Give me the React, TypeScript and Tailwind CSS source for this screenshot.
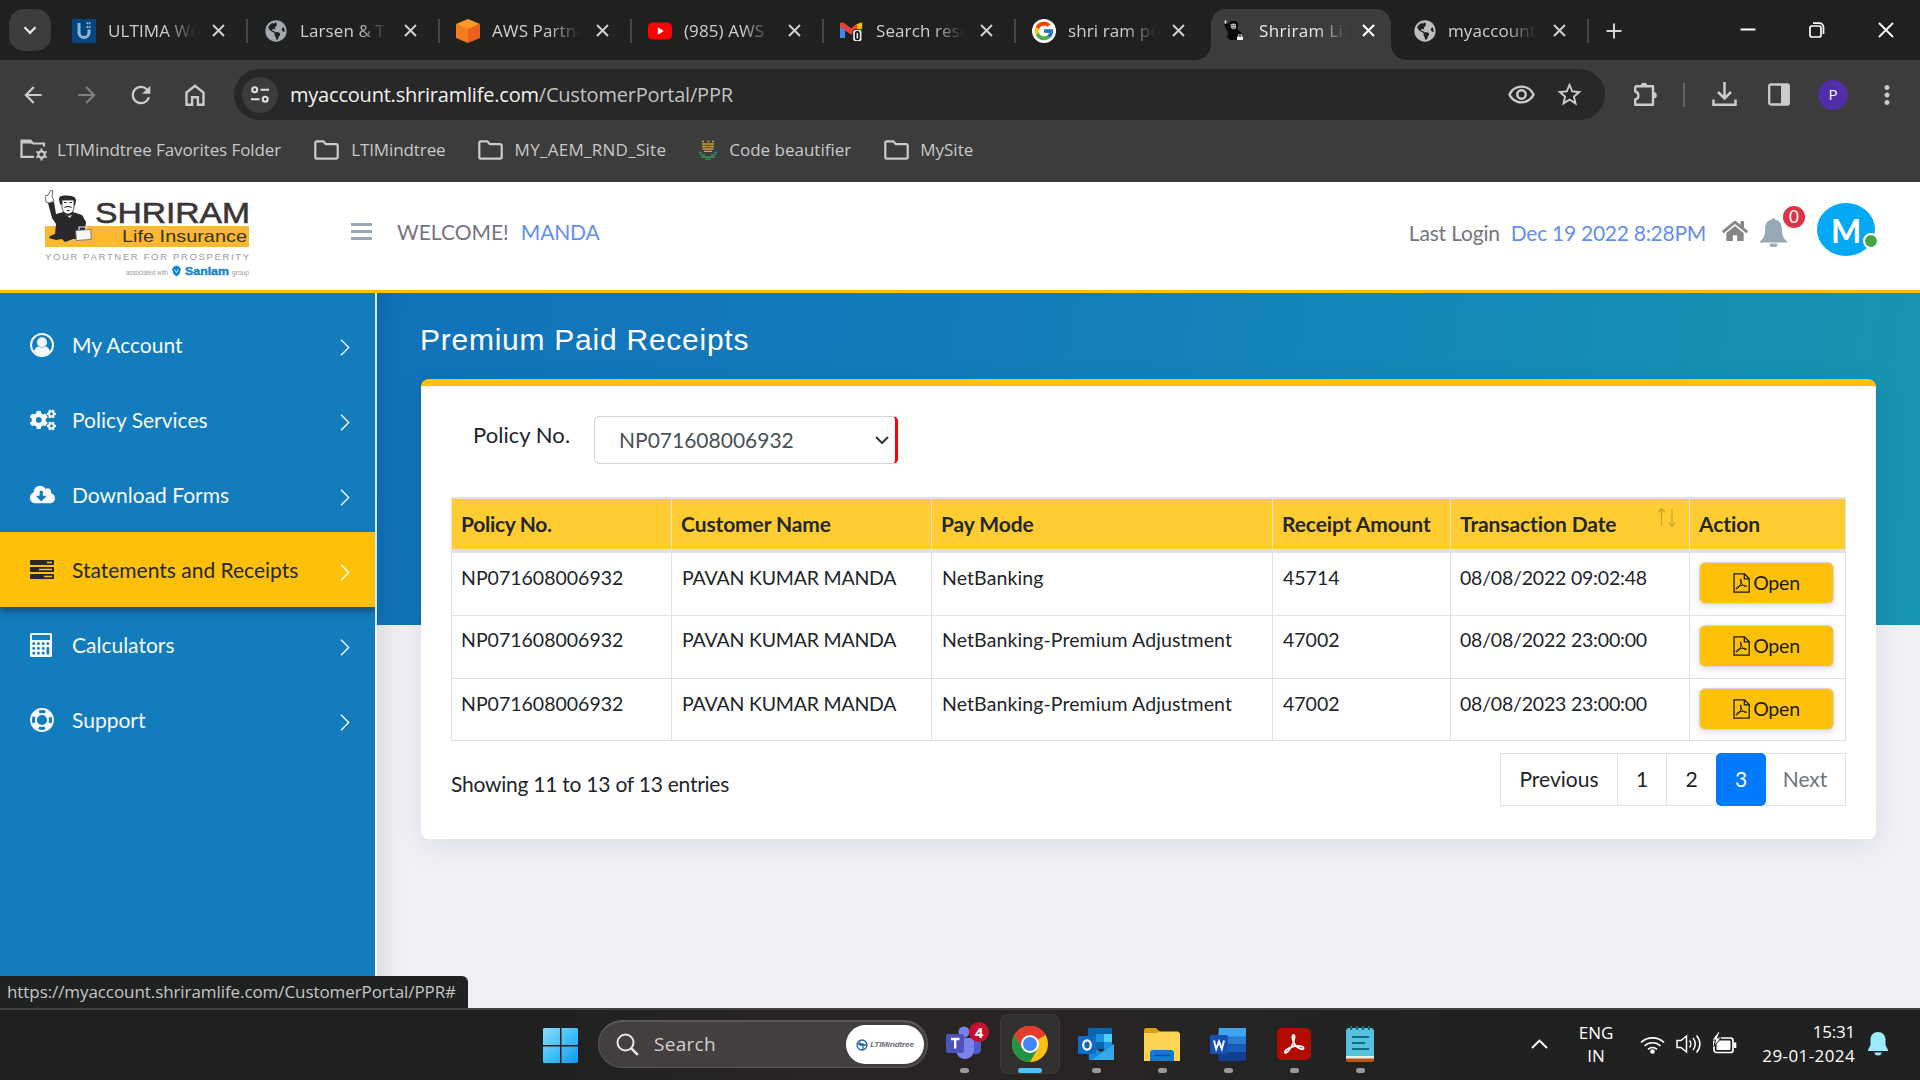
import React from 'react';
import {
  MdArrowBack, MdArrowForward, MdRefresh, MdStarBorder, MdOutlineRemoveRedEye,
  MdMoreVert,
} from 'react-icons/md';
import { FaCogs, FaCloudDownloadAlt, FaGlobeAmericas, FaHome } from 'react-icons/fa';
import { FcGoogle } from 'react-icons/fc';

/* ---------- browser chrome ---------- */

const UltimaIcon = () => (
  <svg width="24" height="24" viewBox="0 0 24 24">
    <rect width="24" height="24" fill="#05457e" />
    <path d="M7 4v9.500a5 5 0 0 0 10 0V10.500" fill="none" stroke="#8fb4d3" strokeWidth="3" />
    <path d="M14.500 4.300h4M14.500 8h4" stroke="#8fb4d3" strokeWidth="2" strokeDasharray="1.800 .6" />
  </svg>
);
const AwsIcon = () => (
  <svg width="24" height="24" viewBox="0 0 24 24">
    <path d="M12 0l12 5-12 6L0 5z" fill="#ff9a2a" />
    <path d="M0 5l12 5v14L0 19z" fill="#f47b20" />
    <path d="M24 5l-12 5v14l12-5z" fill="#ea5f1c" />
  </svg>
);
const YoutubeIcon = () => (
  <svg width="24" height="24" viewBox="0 0 24 24">
    <rect y="3.500" width="24" height="17" rx="4.500" fill="#ff0000" />
    <path d="M9.800 8.300l6 3.700-6 3.700z" fill="#fff" />
  </svg>
);
const GmailIcon = () => (
  <svg width="26" height="24" viewBox="0 0 26 24">
    <path d="M0 5v14.500h5.500V9z" fill="#4285f4" />
    <path d="M18.500 8v8H24V4.500z" fill="#34a853" />
    <path d="M18.500 4.500L24 2.500v6l-5.500 3.500z" fill="#fbbc04" />
    <path d="M0 3.500C2 2 4 3 5.500 4.200L12 9l6.500-5v7L12 16 0 7.500z" fill="#ea4335" />
    <rect x="13.800" y="10.500" width="10" height="13" rx="2.500" fill="#f1f1f1" stroke="#111" strokeWidth="1" />
    <rect x="17" y="13" width="3.600" height="8" rx="1.500" fill="none" stroke="#111" strokeWidth="1.800" />
  </svg>
);
const GoogleIcon = () => (
  <span className="flex size-6 items-center justify-center rounded-full bg-white"><FcGoogle size={22} /></span>
);
const ShriramFavicon = () => (
  <svg width="24" height="24" viewBox="0 0 24 24" className="shrink-0">
    <path d="M1 5l3-1 3 6 7 0 4 3 1 8-12 0-3-3 1-4z" fill="#0a0a0a" />
    <path d="M5 6c0-3 3-4 6-4s5 2 4 6l-1 4-7-1z" fill="#0a0a0a" />
    <path d="M7.500 5.500c2-1.500 4-1.500 5.500 0v3c-1 2.500-4 2.500-5 0z" fill="#b9b9b9" />
    <path d="M8.500 6.500h1.200M11 6.500h1.200M9.500 9h2" stroke="#222" strokeWidth=".9" />
    <path d="M2.500 1v4M1 3h3.300" stroke="#c9c9c9" strokeWidth="1.100" />
    <path d="M14 17.500h6v3.500h-6z" fill="#f4f4f4" />
    <path d="M15.500 17.500v-1.700h3v1.700" fill="none" stroke="#ddd" strokeWidth=".9" />
  </svg>
);
const GlobeIcon = () => <FaGlobeAmericas size={22} color="#a3a9b0" />;

const tabs = [
  { icon: <UltimaIcon />, title: 'ULTIMA Wo' },
  { icon: <GlobeIcon />, title: 'Larsen & Tou' },
  { icon: <AwsIcon />, title: 'AWS Partne' },
  { icon: <YoutubeIcon />, title: '(985) AWS' },
  { icon: <GmailIcon />, title: 'Search resu' },
  { icon: <GoogleIcon />, title: 'shri ram po' },
];

const CloseX = ({ className = '' }: { className?: string }) => (
  <svg className={className} width="13" height="13" viewBox="0 0 13 13">
    <path d="M1 1l11 11M12 1L1 12" stroke="currentColor" strokeWidth="2.100" />
  </svg>
);

const TabTitle = ({ children }: { children: React.ReactNode }) => (
  <span className="ml-3 w-[88px] shrink-0 overflow-hidden text-[17px] tracking-[0.1px] whitespace-nowrap [mask-image:linear-gradient(90deg,#000_65%,transparent_100%)]">
    {children}
  </span>
);

const TabStrip = () => (
  <div className="flex h-[60px] items-center bg-[#1f2020] text-[#cfcfcf]">
    <div className="ml-[9px] flex size-[42px] items-center justify-center rounded-[15px] bg-[#3c3c3c]">
      <svg width="14" height="9" viewBox="0 0 14 9"><path d="M1.500 1.300L7 6.800l5.500-5.500" fill="none" stroke="#e6e6e6" strokeWidth="2.300" /></svg>
    </div>
    <div className="ml-[21px] flex">
      {tabs.map((t, i) => (
        <div key={t.title} className="flex h-[24px] w-[192px] items-center pt-px">
          <span className="flex w-6 shrink-0 justify-center">{t.icon}</span>
          <TabTitle>{t.title}</TabTitle>
          <CloseX className="ml-[16px]" />
          {i < 5 && <span className="ml-[21px] h-6 w-[2px] bg-[#474747]" />}
        </div>
      ))}
    </div>
    <div className="-ml-[15px] flex h-[51px] items-end self-end">
      <span className="ml-[-13px] size-[15px] bg-[radial-gradient(circle_at_0_0,#1f2020_14.500px,#3c3c3c_15px)]" />
      <div className="flex h-[51px] w-[180px] items-center rounded-t-[15px] bg-[#3c3c3c] pb-[8px] pl-[12px]">
        <ShriramFavicon />
        <TabTitle><span className="tracking-[0.35px] text-[#e8e8e8]">Shriram Life</span></TabTitle>
        <CloseX className="ml-[15px] text-white" />
      </div>
      <span className="size-[15px] bg-[radial-gradient(circle_at_100%_0,#1f2020_14.500px,#3c3c3c_15px)]" />
    </div>
    <div className="ml-[8px] flex items-center pt-px">
      <FaGlobeAmericas size={22} color="#bdbdbd" className="shrink-0" />
      <TabTitle>myaccount.s</TabTitle>
      <CloseX className="ml-[17px]" />
      <span className="ml-[21px] h-6 w-[2px] bg-[#474747]" />
      <svg className="ml-[17px]" width="16" height="16" viewBox="0 0 16 16"><path d="M8 .5v15M.5 8h15" stroke="#d5d5d5" strokeWidth="2" /></svg>
    </div>
    <div className="mr-[26px] ml-auto flex items-center gap-[53px] text-white">
      <svg width="16" height="16" viewBox="0 0 16 16"><path d="M.5 7.500h15" stroke="#fff" strokeWidth="2" /></svg>
      <svg width="16" height="16" viewBox="0 0 16 16" fill="none" stroke="#fff" strokeWidth="1.700">
        <rect x="1" y="4" width="11" height="11" rx="2" />
        <path d="M4 1.200h6.500a4 4 0 0 1 4 4V12" />
      </svg>
      <svg width="16" height="16" viewBox="0 0 16 16"><path d="M1 1l14 14M15 1L1 15" stroke="#fff" strokeWidth="1.800" /></svg>
    </div>
  </div>
);

const Toolbar = () => (
  <div className="flex h-[69px] items-center bg-[#3c3c3c] text-[#cbcbcb]">
    <MdArrowBack size={26} className="ml-5" />
    <MdArrowForward size={26} className="ml-[28px] text-[#7f7f7f]" />
    <MdRefresh size={28} className="ml-[27px]" />
    <svg className="ml-[30px]" width="20" height="22" viewBox="0 0 20 22">
      <path d="M1.500 8.500L10 1.800l8.500 6.700v12.200h-5.600v-7.500H7.100v7.500H1.500z" fill="none" stroke="currentColor" strokeWidth="2.400" />
    </svg>
    <div className="ml-[29px] flex h-[51px] w-[1371px] items-center rounded-full bg-[#282828] pl-2">
      <span className="flex size-9 items-center justify-center rounded-full bg-[#3c3c3c]">
        <svg width="18" height="17" viewBox="0 0 18 17" fill="none" stroke="#dedede" strokeWidth="2.100">
          <circle cx="3.700" cy="3.700" r="2.500" /><path d="M9.500 3.700H18M0 13.300h8.500" /><circle cx="14.200" cy="13.300" r="2.500" />
        </svg>
      </span>
      <span className="ml-3 text-[20px] tracking-[-0.21px] text-[#c3c3c3]">
        <span className="text-[#f2f2f2]">myaccount.shriramlife.com</span>/CustomerPortal/PPR
      </span>
      <MdOutlineRemoveRedEye size={29} className="ml-auto" />
      <MdStarBorder size={29} className="mr-[21px] ml-[19px]" />
    </div>
    <svg className="ml-[27px]" width="26" height="26" viewBox="0 0 26 26">
      <path d="M3.200 4.300H21v5.200M21 16.500v6.300H3.200v-5.300c4.300-.6 4.300-7.300 0-8V4.300M21 9.300v7.500" fill="none" stroke="currentColor" strokeWidth="2.400" strokeLinejoin="round" />
      <path d="M8.700 4a3.300 3.300 0 0 1 6.600 0zM21.500 10a3.300 3.300 0 0 1 0 6.600z" fill="currentColor" />
    </svg>
    <span className="ml-[25px] h-6 w-[2px] bg-[#646464]" />
    <svg className="ml-[27px]" width="25" height="25" viewBox="0 0 25 25" fill="none" stroke="currentColor" strokeWidth="2.500">
      <path d="M12.500 0v16M6 10l6.500 6.500L19 10M1.500 17.500v5.300h22v-5.300" />
    </svg>
    <svg className="ml-[31px]" width="22" height="23" viewBox="0 0 22 23">
      <rect x="1.200" y="1.500" width="19.600" height="20" rx="1.500" fill="none" stroke="currentColor" strokeWidth="2.300" />
      <path d="M13 1h8v21h-8z" fill="currentColor" />
    </svg>
    <span className="ml-[28px] flex size-[30px] items-center justify-center rounded-full bg-[#512da8] text-[15px] text-white">P</span>
    <MdMoreVert size={30} className="ml-[24px]" />
  </div>
);

const Folder = () => (
  <svg width="25" height="20" viewBox="0 0 25 20">
    <path d="M2.700 1.300h6.600l2.600 2.900h10.400a1.400 1.400 0 0 1 1.400 1.400v11.600a1.400 1.400 0 0 1-1.400 1.400H2.700a1.400 1.400 0 0 1-1.400-1.400V2.700a1.400 1.400 0 0 1 1.400-1.400z" fill="none" stroke="#cbcbcb" strokeWidth="2.200" />
  </svg>
);
const ManagedFolder = () => (
  <svg width="28" height="22" viewBox="0 0 28 22">
    <path d="M14 17.800H1.500V1.500h9l2.500 3h11v3" fill="none" stroke="#cbcbcb" strokeWidth="2.200" />
    <path d="M1.500 1.500h9l2.500 3H1.500z" fill="#cbcbcb" />
    <circle cx="21.500" cy="15.500" r="3.200" fill="none" stroke="#cbcbcb" strokeWidth="2.200" />
    <path d="M21.500 9.500v12M16.300 12.500l10.400 6M16.300 18.500l10.400-6" stroke="#cbcbcb" strokeWidth="2" strokeDasharray="2.500 7 2.500" />
  </svg>
);
const Tulip = () => (
  <svg width="18" height="20" viewBox="0 0 18 20" fill="none" strokeWidth="1.300">
    <path d="M3 1.500h2M8 1.500h2.500M13 1.500h2M3 4h12M3 6.500h12M3.500 9h11M5 11.300h8" stroke="#c9a63a" />
    <path d="M8 1.500h2.500M7.500 4h3M7.500 6.500h3" stroke="#c0652a" />
    <path d="M0 12.500h2.500M15.500 12.500H18M1 14.800h5M12 14.800h5M2.500 17h13M6 19.200h6" stroke="#2e9b57" />
  </svg>
);

const Bookmarks = () => (
  <div className="flex h-[53px] items-center bg-[#3c3c3c] pb-[12px] text-[17px] text-[#c9c9c9]">
    <span className="ml-5 flex items-center"><ManagedFolder /><span className="ml-[9px] tracking-[-0.08px]">LTIMindtree Favorites Folder</span></span>
    <span className="ml-[33px] flex items-center"><Folder /><span className="ml-[12px] tracking-[-0.1px]">LTIMindtree</span></span>
    <span className="ml-[32px] flex items-center"><Folder /><span className="ml-[12px] tracking-[0.28px]">MY_AEM_RND_Site</span></span>
    <span className="ml-[33px] flex items-center"><Tulip /><span className="ml-[12px]">Code beautifier</span></span>
    <span className="ml-[33px] flex items-center"><Folder /><span className="ml-[11px]">MySite</span></span>
  </div>
);

/* ---------- portal ---------- */

const Logo = () => (
  <svg width="204" height="88" viewBox="0 0 204 88" fontFamily="Liberation Sans, sans-serif">
    <rect x="0" y="36" width="204" height="21" fill="#fcb82e" />
    <path d="M3 13l6-1 2 12 7-2 10 0 9 3 4 7-1 9-4 2-2 6-6 0-8 3-3-3-6 1-7-2 1-2 5-2 1-10-4-6z" fill="#2b2829" />
    <path d="M1 12L0 6l3-1 3-5 2 1-1 5 2 5-5 2z" fill="#fff" stroke="#555" strokeWidth=".9" />
    <path d="M14 9c0-3 4-4 8-3.500s9 .5 9 5l-1 5-15-1z" fill="#2b2829" />
    <path d="M17 10h12v7c0 4-3 7-6 7s-6-3-6-7z" fill="#f5f5f5" stroke="#333" strokeWidth=".8" />
    <path d="M19 12.500h2.500M24.500 12.500H27M19.500 17.500q3.500-2 7 0M22 20.500h2.500" fill="none" stroke="#222" strokeWidth="1.100" />
    <path d="M20 24l3 2 4-1-2 3z" fill="#eee" />
    <rect x="31" y="40" width="15" height="10" fill="#f6f6f6" stroke="#666" strokeWidth=".8" transform="rotate(-4 38 45)" />
    <path d="M34 40v-3h7v2.500" fill="none" stroke="#eee" strokeWidth="1.200" />
    <text x="50" y="32.500" fontSize="29.500" fill="#3a3637" stroke="#3a3637" strokeWidth=".6" textLength="155" lengthAdjust="spacingAndGlyphs">SHRIRAM</text>
    <text x="77" y="52" fontSize="16.500" fill="#3a3225" textLength="125" lengthAdjust="spacingAndGlyphs">Life Insurance</text>
    <text x="0" y="69.500" fontSize="9.500" fill="#9b9b9d" textLength="204" lengthAdjust="spacing">YOUR PARTNER FOR PROSPERITY</text>
    <text x="81" y="85" fontSize="6.500" fill="#9a9a9c" textLength="42" lengthAdjust="spacingAndGlyphs">associated with</text>
    <path d="M127 79l2-2.500 2.500-1 2.500 1 2 2.500-1.500 5-3 2.500-3-2.500z" fill="#1484cf" />
    <path d="M129.500 79.500l2 3 2-3" fill="none" stroke="#fff" strokeWidth=".9" />
    <text x="140" y="85" fontSize="11" fontWeight="700" fill="#1484cf" stroke="#1484cf" strokeWidth=".4" textLength="44" lengthAdjust="spacingAndGlyphs">Sanlam</text>
    <text x="187" y="85" fontSize="6.500" fill="#9a9a9c" textLength="17" lengthAdjust="spacingAndGlyphs">group</text>
  </svg>
);

const Header = () => (
  <header className="flex h-[111px] items-center border-b-[3px] border-[#ffc107] bg-white font-[Lato] text-[21px]">
    <div className="mb-1 ml-[45px]"><Logo /></div>
    <div className="mb-[9px] ml-[102px] flex h-[17px] w-[21px] flex-col justify-between">
      <span className="h-[3px] bg-[#98a9b3]" /><span className="h-[3px] bg-[#98a9b3]" /><span className="h-[3px] bg-[#98a9b3]" />
    </div>
    <span className="mb-2 ml-[25px] text-[#73757f]">WELCOME!</span>
    <span className="mb-2 ml-[12px] tracking-[-0.15px] text-[#648fee]">MANDA</span>
    <span className="mb-[6px] ml-auto tracking-[-0.18px] text-[#73757f]">Last Login</span>
    <span className="mb-[6px] ml-[11px] tracking-[-0.27px] text-[#648fee]">Dec 19 2022 8:28PM</span>
    <FaHome size={26} className="mb-[10px] ml-[16px]" color="#868686" />
    <span className="relative mb-[8px] ml-[12px]">
      <svg width="27" height="29" viewBox="0 0 27 29" fill="#98a9b3">
        <path d="M12 1.500a1.500 1.500 0 0 1 3 0c4.500.8 6.800 4.500 6.800 8.500 0 7.500 1.700 10.500 5.200 13.500v1H0v-1C3.500 20.500 5.200 17.500 5.200 10c0-4 2.300-7.700 6.800-8.500z" />
        <path d="M9.500 25.500h8a4 4 0 0 1-8 0z" />
      </svg>
      <span className="absolute -top-[12px] left-[23px] flex size-[22px] items-center justify-center rounded-full bg-[#dc3545] text-[17px] text-white">0</span>
    </span>
    <span className="relative mr-[45px] mb-[14px] ml-[30px] flex h-[53px] w-[58px] items-center justify-center rounded-[50%] bg-[#03a9f4] pt-[3px] text-[32px] font-bold text-white">
      M
      <span className="absolute right-[-4px] bottom-[7px] size-4 rounded-full border-2 border-white bg-[#46a546]" />
    </span>
  </header>
);

const UserIcon = () => (
  <svg width="24" height="24" viewBox="0 0 24 24">
    <circle cx="12" cy="12" r="11" fill="none" stroke="currentColor" strokeWidth="2" />
    <circle cx="12" cy="9.300" r="5" fill="currentColor" />
    <path d="M4 19c.8-4 3-5.500 4.500-5.500 2 1.400 5 1.400 7 0C17 13.500 19.200 15 20 19c-4 4.500-12 4.500-16 0z" fill="currentColor" />
  </svg>
);
const ServerIcon = () => (
  <svg width="24" height="20" viewBox="0 0 24 20">
    <rect width="24" height="5" rx=".8" fill="currentColor" /><rect y="7" width="24" height="5" rx=".8" fill="currentColor" /><rect y="14" width="24" height="5" rx=".8" fill="currentColor" />
    <path d="M17 2.500h5M9 9.500h13M14 16.500h8" stroke="#ffc107" strokeWidth="1.600" />
  </svg>
);
const CalcIcon = () => (
  <svg width="22" height="24" viewBox="0 0 22 24">
    <rect width="22" height="24" rx="1.500" fill="currentColor" />
    <g fill="#127cbc">
      <rect x="2" y="2" width="18" height="5" />
      {[0, 1, 2].map((r) => [0, 1, 2, 3].map((c) => (r > 0 && c === 3 ? null : <rect key={`${r}${c}`} x={2.400 + c * 4.700} y={9.300 + r * 4.700} width="2.700" height="2.700" rx="1" />)))}
      <rect x="16.500" y="14" width="2.700" height="7.400" rx="1" />
    </g>
  </svg>
);
const LifeRing = () => (
  <svg width="24" height="24" viewBox="0 0 24 24" fill="none">
    <circle cx="12" cy="12" r="8.500" stroke="currentColor" strokeWidth="6.800" />
    <circle cx="12" cy="12" r="8.500" stroke="#127cbc" strokeWidth="3" strokeDasharray="6.200 7.150" strokeDashoffset="3.100" />
  </svg>
);

const menu = [
  { label: 'My Account', icon: <UserIcon /> },
  { label: 'Policy Services', icon: <FaCogs size={26} /> },
  { label: 'Download Forms', icon: <FaCloudDownloadAlt size={25} /> },
  { label: 'Statements and Receipts', icon: <ServerIcon />, active: true },
  { label: 'Calculators', icon: <CalcIcon /> },
  { label: 'Support', icon: <LifeRing /> },
];

const Sidebar = () => (
  <aside className="w-[375px] shrink-0 bg-[#127cbc] pt-[14px]">
    {menu.map((m) => (
      <div
        key={m.label}
        className={
          m.active
            ? 'flex h-[75px] items-center bg-[#ffc107] pl-[30px] text-[#26292c] shadow-[0_5px_6px_rgba(20,50,80,0.55)]'
            : 'flex h-[75px] items-center pl-[30px] text-[#f8f9fa]'
        }
      >
        <span className="flex w-[42px]">{m.icon}</span>
        <span className="text-[21px]">{m.label}</span>
        <svg className="mt-[5px] mr-[25px] ml-auto" width="10" height="17" viewBox="0 0 10 17"><path d="M1 .8l7.700 7.700L1 16.200" fill="none" stroke="#fff" strokeWidth="1.300" /></svg>
      </div>
    ))}
  </aside>
);

const PdfIcon = () => (
  <svg width="17" height="20" viewBox="0 0 17 20" fill="none" stroke="currentColor" strokeWidth="1.300">
    <path d="M1 .8h10.500L16.200 5.500v13.700H1zM11.300.8v5h4.900" />
    <path d="M7.700 6c.9 0 .6 2.500 0 4.500S5 16 3.500 16s.3-2.500 3.500-3.200 6.500-.6 6.500.4-3 .2-4.300-2S6.700 6 7.700 6z" strokeWidth="1" />
  </svg>
);

const rows = [
  { mode: 'NetBanking', amount: '45714', date: '08/08/2022 09:02:48' },
  { mode: 'NetBanking-Premium Adjustment', amount: '47002', date: '08/08/2022 23:00:00' },
  { mode: 'NetBanking-Premium Adjustment', amount: '47002', date: '08/08/2023 23:00:00' },
];

const Table = () => (
  <div className="mt-[33px] ml-[30px] w-[1395px] border-t-2 border-r border-[#dee2e6] text-[#212529]">
    <div className="grid h-[54px] grid-cols-[220px_260px_341px_178px_239px_1fr] border-b-4 border-[#dee2e6] bg-[#ffcd31] text-[21px] leading-[50px] font-bold tracking-[-0.1px] text-[#25282b] *:border-l *:border-[#e0e3e6] *:pl-[9px]">
      <div className="tracking-[-0.3px]">Policy No.</div>
      <div>Customer Name</div>
      <div>Pay Mode</div>
      <div>Receipt Amount</div>
      <div className="flex">
        Transaction Date
        <svg className="mt-[9px] ml-[41px]" width="20" height="19" viewBox="0 0 20 19" fill="none" stroke="#c9a332" strokeWidth="1.300">
          <path d="M4.500 18V1M1 4.500l3.500-4 3.500 4M15 1v17M11.500 14.500l3.500 4 3.500-4" />
        </svg>
      </div>
      <div>Action</div>
    </div>
    {rows.map((r, i) => (
      <div
        key={i}
        className="group grid h-[63px] grid-cols-[220px_260px_341px_178px_239px_1fr] border-b border-[#dee2e6] text-[19.500px] leading-[50px] *:border-l *:border-[#dee2e6] *:pl-[9px] last:h-[62px] odd:leading-[48px]"
      >
        <div>NP071608006932</div>
        <div className="pl-[10px]! tracking-[-0.2px]">PAVAN KUMAR MANDA</div>
        <div className="pl-[10px]! tracking-[0.1px]">{r.mode}</div>
        <div className="pl-[10px]!">{r.amount}</div>
        <div className="tracking-[-0.2px]">{r.date}</div>
        <div className="flex">
          <button className="mt-[9px] flex h-[42px] w-[135px] items-center justify-center gap-[3px] rounded-md border border-[#d5d8dc] bg-[#ffc107] leading-none text-[#1b1b1b] shadow-[0_2px_6px_rgba(0,0,0,0.14)]">
            <PdfIcon />
            <span className="tracking-[-0.2px]">Open</span>
          </button>
        </div>
      </div>
    ))}
  </div>
);

const Pagination = () => (
  <div className="flex h-[53px] text-[21px] text-[#212529] *:flex *:items-center *:justify-center *:border-[#dee2e6] *:pb-[2px]">
    <span className="w-[118px] border">Previous</span>
    <span className="w-[49px] border-y border-r">1</span>
    <span className="w-[49px] border-y">2</span>
    <span className="w-[50px] rounded-[5px] bg-[#007bff] text-white">3</span>
    <span className="w-[80px] border-y border-r pr-px text-[#6c757d]">Next</span>
  </div>
);

const Main = () => (
  <main className="relative flex-1 border-l-2 border-white/80 bg-[linear-gradient(to_bottom,transparent_332px,#f0f1f7_332px),linear-gradient(100deg,#1172ba_0%,#127cba_35%,#1489b7_65%,#1896b0_100%)] shadow-[inset_26px_0_26px_-22px_rgba(0,0,0,0.12)]">
    <h1 className="pt-[29px] pl-[43px] font-['Liberation_Sans'] text-[30px] leading-[36px] tracking-[0.75px] text-white">Premium Paid Receipts</h1>
    <section className="mt-[21px] ml-[44px] h-[460px] w-[1455px] rounded-lg border-t-[7px] border-[#ffc107] bg-white shadow-[0_6px_30px_rgba(10,20,60,0.09)]">
      <div className="flex h-[78px] pt-[30px] pl-[52px]">
        <label className="mt-[5px] w-[121px] text-[22px] leading-7 tracking-[0.05px] text-[#212529]">Policy No.</label>
        <div className="flex h-12 w-[304px] items-center rounded-[5px] border border-r-[3px] border-[#ced4da] border-r-[#f00] pl-6 text-[21px] text-[#495057]">
          NP071608006932
          <svg className="mr-[6px] ml-auto" width="14" height="9" viewBox="0 0 14 9"><path d="M1 1l6 6 6-6" fill="none" stroke="#343a40" strokeWidth="2.200" /></svg>
        </div>
      </div>
      <Table />
      <div className="flex justify-between pt-3 pr-[30px] pl-[30px]">
        <span className="pt-[18px] text-[21px] leading-[26px] tracking-[-0.24px] text-[#212529]">Showing 11 to 13 of 13 entries</span>
        <Pagination />
      </div>
    </section>
  </main>
);

/* ---------- taskbar ---------- */

const WindowsIcon = () => (
  <svg width="36" height="35" viewBox="0 0 36 35">
    <defs>
      <linearGradient id="win" gradientUnits="userSpaceOnUse" x1="0" y1="0" x2="36" y2="35"><stop offset="0" stopColor="#8fdcfb" /><stop offset=".5" stopColor="#43bffb" /><stop offset="1" stopColor="#1495f3" /></linearGradient>
    </defs>
    <path d="M1 0h16v17H0V1zM18.500 0H34l1 1v16H18.500zM0 18.500h17V35H1l-1-1zM18.500 18.500H35V34l-1 1H18.500z" fill="url(#win)" />
  </svg>
);
const TeamsIcon = () => (
  <svg width="36" height="36" viewBox="0 0 36 36">
    <circle cx="18" cy="6" r="5.500" fill="#7b83eb" />
    <circle cx="29" cy="7" r="4" fill="#5059c9" />
    <path d="M24 12h11v11c0 3-2 5-5 5s-5-2-5-5z" fill="#5059c9" />
    <path d="M10 12h18v12c0 5-4 9-9 9s-9-4-9-9z" fill="#7b83eb" />
    <rect y="8" width="18" height="19" rx="2" fill="#4b53bc" />
    <path d="M5 13h8.500M9.200 13v9.500" stroke="#fff" strokeWidth="2.300" />
  </svg>
);
const ChromeIcon = () => (
  <svg width="36" height="36" viewBox="0 0 48 48">
    <circle cx="24" cy="24" r="24" fill="#fbc116" />
    <path d="M24 24L3.200 12A24 24 0 0 1 44.800 12z" fill="#e33b2e" />
    <path d="M24 12h20.800A24 24 0 0 0 3.200 12L13.600 30z" fill="#e33b2e" />
    <path d="M3.200 12A24 24 0 0 0 24 48l10.400-18H13.600z" fill="#229342" />
    <circle cx="24" cy="24" r="12" fill="#fff" />
    <circle cx="24" cy="24" r="9.300" fill="#4285f4" />
  </svg>
);
const OutlookIcon = () => (
  <svg width="36" height="33" viewBox="0 0 36 33">
    <path d="M11 0h22l1 1v20H10V1z" fill="#0a64b4" />
    <path d="M18 6h8v8h-8zM26 14h8v8h-8z" fill="#1993e0" /><path d="M26 6h8v8h-8z" fill="#50d0fb" />
    <path d="M10 15l13 9 13-8v16H11z" fill="#1b87d8" />
    <path d="M36 16v16H14z" fill="#38a8ec" />
    <rect y="8" width="18" height="18" rx="1.500" fill="#0f6cc4" />
    <ellipse cx="9" cy="17" rx="3.800" ry="4.600" fill="none" stroke="#fff" strokeWidth="2.200" />
  </svg>
);
const ExplorerIcon = () => (
  <svg width="36" height="33" viewBox="0 0 36 33">
    <path d="M0 1.500L1.500 0H12l4 4-3 3H0z" fill="#e09c10" />
    <path d="M0 5h12l3-1.500h19l2 2V33H0z" fill="#ffd354" />
    <path d="M6 33V25c0-2 1-3 3-3h18c2 0 3 1 3 3v8z" fill="#1379ce" />
    <path d="M11 27.500h15" stroke="#0b4f94" strokeWidth="1.500" />
  </svg>
);
const WordIcon = () => (
  <svg width="36" height="33" viewBox="0 0 36 33">
    <path d="M9 0h27v9H8z" fill="#41a5ee" /><path d="M8 8.500h28v8H8z" fill="#2b7cd3" /><path d="M8 16.500h28v8H8z" fill="#185abd" /><path d="M8 24.500h28V32l-1 1H9z" fill="#103f91" />
    <rect y="7" width="18" height="19" rx="1.500" fill="#1751b0" />
    <path d="M4 12.500l2.200 8.500L9 13.500l2.800 7.500L14 12.500" fill="none" stroke="#fff" strokeWidth="1.900" />
  </svg>
);
const AcrobatIcon = () => (
  <svg width="34" height="32" viewBox="0 0 34 32">
    <rect width="34" height="32" rx="5" fill="#b30b00" />
    <path d="M16.500 7c1.800 0 1 5-1 9.500S9.500 26 8 24.500s5-5.500 10-6.300 9 .3 8.500 2.300-6-.3-8.700-4S14.700 7 16.500 7z" fill="none" stroke="#fff" strokeWidth="1.800" />
  </svg>
);
const NotepadIcon = () => (
  <svg width="28" height="36" viewBox="0 0 28 36">
    <rect y="28" width="28" height="8" rx="1.500" fill="#b5560f" /><path d="M0 28h28v4.500H0z" fill="#eee" />
    <path d="M2 2h24l2 2v26H0V4z" fill="#55c3dc" />
    <path d="M5 0v4M11 0v4M17 0v4M23 0v4" stroke="#0e6e8d" strokeWidth="2.300" />
    <path d="M6 11h17M6 17h13M6 23h17" stroke="#0b6a8c" strokeWidth="2" />
  </svg>
);

const apps = [
  { name: 'Outlook', icon: <OutlookIcon /> },
  { name: 'Explorer', icon: <ExplorerIcon /> },
  { name: 'Word', icon: <WordIcon /> },
  { name: 'Acrobat', icon: <AcrobatIcon /> },
  { name: 'Notepad', icon: <NotepadIcon /> },
];

const AppSlot = ({ children }: { children: React.ReactNode }) => (
  <div className="flex h-full w-[66px] flex-col items-center">
    <div className="mt-4 flex h-9 items-center justify-center">{children}</div>
    <span className="mt-[6px] h-[5px] w-[9px] rounded-full bg-[#9a9a9a]" />
  </div>
);

const Taskbar = () => (
  <div className="flex h-[72px] items-center border-t-2 border-[#414141] bg-[linear-gradient(90deg,#212121_30%,#2a2524_45%,#272424_60%,#212121_75%)] font-['Open_Sans'] text-white">
    <span className="ml-[543px]"><WindowsIcon /></span>
    <div className="mb-[2px] ml-[19px] flex h-12 w-[330px] items-center rounded-full border border-t-2 border-[#5a5757] bg-[#423f3e] pr-[3px] pl-[17px]">
      <svg width="23" height="23" viewBox="0 0 23 23" fill="none" stroke="#e8e8e8"><circle cx="9.500" cy="9.500" r="8" strokeWidth="2" /><path d="M15.300 15.300l6.500 6.500" strokeWidth="2.600" /></svg>
      <span className="ml-[15px] text-[19px] tracking-[0.3px] text-[#d2d0d0]">Search</span>
      <span className="ml-auto flex h-[39px] w-[78px] items-center justify-center gap-[2px] rounded-full bg-white">
        <svg width="12" height="12" viewBox="0 0 12 12" fill="none" stroke="#1f63a0" strokeWidth="1.300"><circle cx="6" cy="6" r="5" /><path d="M1.500 5h5.500v5.500M4 2.500v3.500h6.500" /></svg>
        <span className="font-['Liberation_Sans'] text-[8px] font-bold tracking-[-0.1px] text-[#6b6b72] italic">LTIMindtree</span>
      </span>
    </div>
    <div className="ml-[3px] flex h-full">
      <div className="relative">
        <AppSlot><TeamsIcon /></AppSlot>
        <span className="absolute top-[12px] left-[38px] flex size-5 items-center justify-center rounded-full bg-[#c8102e] text-[15px] font-bold">4</span>
      </div>
      <div className="mx-[3px] mt-1 flex h-[60px] w-[60px] flex-col items-center rounded-lg border border-[#3d3a3a] bg-[#322f2f]">
        <div className="mt-[11px]"><ChromeIcon /></div>
        <span className="mt-[6px] h-[5px] w-6 shrink-0 rounded-full bg-[#4cc2ff]" />
      </div>
      {apps.map((a) => <AppSlot key={a.name}>{a.icon}</AppSlot>)}
    </div>
    <svg className="mb-[2px] ml-auto" width="17" height="10" viewBox="0 0 17 10"><path d="M1 9l7.500-7.500L16 9" fill="none" stroke="#fff" strokeWidth="1.900" /></svg>
    <div className="mb-[2px] ml-[31px] text-center text-[17px] leading-[23px]"><div>ENG</div><div>IN</div></div>
    <svg className="mb-[2px] ml-[27px]" width="25" height="19" viewBox="0 0 25 19" fill="none" stroke="#fff" strokeWidth="1.700">
      <path d="M1 7.500a16.500 16.500 0 0 1 23 0M4.500 11a11.500 11.500 0 0 1 16 0M8 14.300a6.500 6.500 0 0 1 9 0" /><circle cx="12.500" cy="16.500" r="1.500" fill="#fff" />
    </svg>
    <svg className="mb-[2px] ml-[11px]" width="25" height="20" viewBox="0 0 25 20" fill="none" stroke="#fff" strokeWidth="1.500">
      <path d="M1 6.500v7h4L10.500 18V2L5 6.500zM13.500 6.500c1.800 2 1.800 5 0 7M17 4c3 3.500 3 8.500 0 12M20.500 1.500c4.500 5 4.500 12 0 17" />
    </svg>
    <svg className="mb-[5px] ml-[11px]" width="25" height="22" viewBox="0 0 25 22">
      <rect x="2" y="6" width="19" height="14.500" rx="2.500" fill="none" stroke="#fff" strokeWidth="1.700" /><rect x="4.500" y="8.500" width="14" height="9.500" rx="1" fill="#fff" /><path d="M23 10.500v5.500" stroke="#fff" strokeWidth="2.600" />
      <path d="M6.500-.5L0 8h3.500L2 14.500 9 6H5.500L8-.5z" fill="#fff" stroke="#212121" strokeWidth="1" />
    </svg>
    <div className="mb-[3px] ml-[25px] text-right text-[17px] leading-[24px] tracking-[0.4px]"><div className="tracking-[-0.2px]">15:31</div><div>29-01-2024</div></div>
    <svg className="mb-[2px] mr-[32px] ml-[13px]" width="20" height="24" viewBox="0 0 20 24" fill="#99ebff">
      <path d="M10 0c4.500 0 7.500 3.500 7.500 7.500V13l2.500 5v1H0v-1l2.500-5V7.500C2.500 3.500 5.500 0 10 0zM6.500 20.500h7a3.500 3 0 0 1-7 0z" />
    </svg>
  </div>
);

export default function App() {
  return (
    <div className="relative flex h-[1080px] w-[1920px] flex-col overflow-hidden font-['Open_Sans',sans-serif]">
      <TabStrip />
      <Toolbar />
      <Bookmarks />
      <Header />
      <div className="flex flex-1 bg-[#f0f1f7] font-[Lato]">
        <Sidebar />
        <Main />
      </div>
      <Taskbar />
      <div className="absolute top-[976px] left-0 flex h-8 w-[468px] items-center rounded-tr-md bg-[#202121] pl-[7px] text-[17px] tracking-[-0.08px] text-[#c4c6c8]">
        https://myaccount.shriramlife.com/CustomerPortal/PPR#
      </div>
    </div>
  );
}
